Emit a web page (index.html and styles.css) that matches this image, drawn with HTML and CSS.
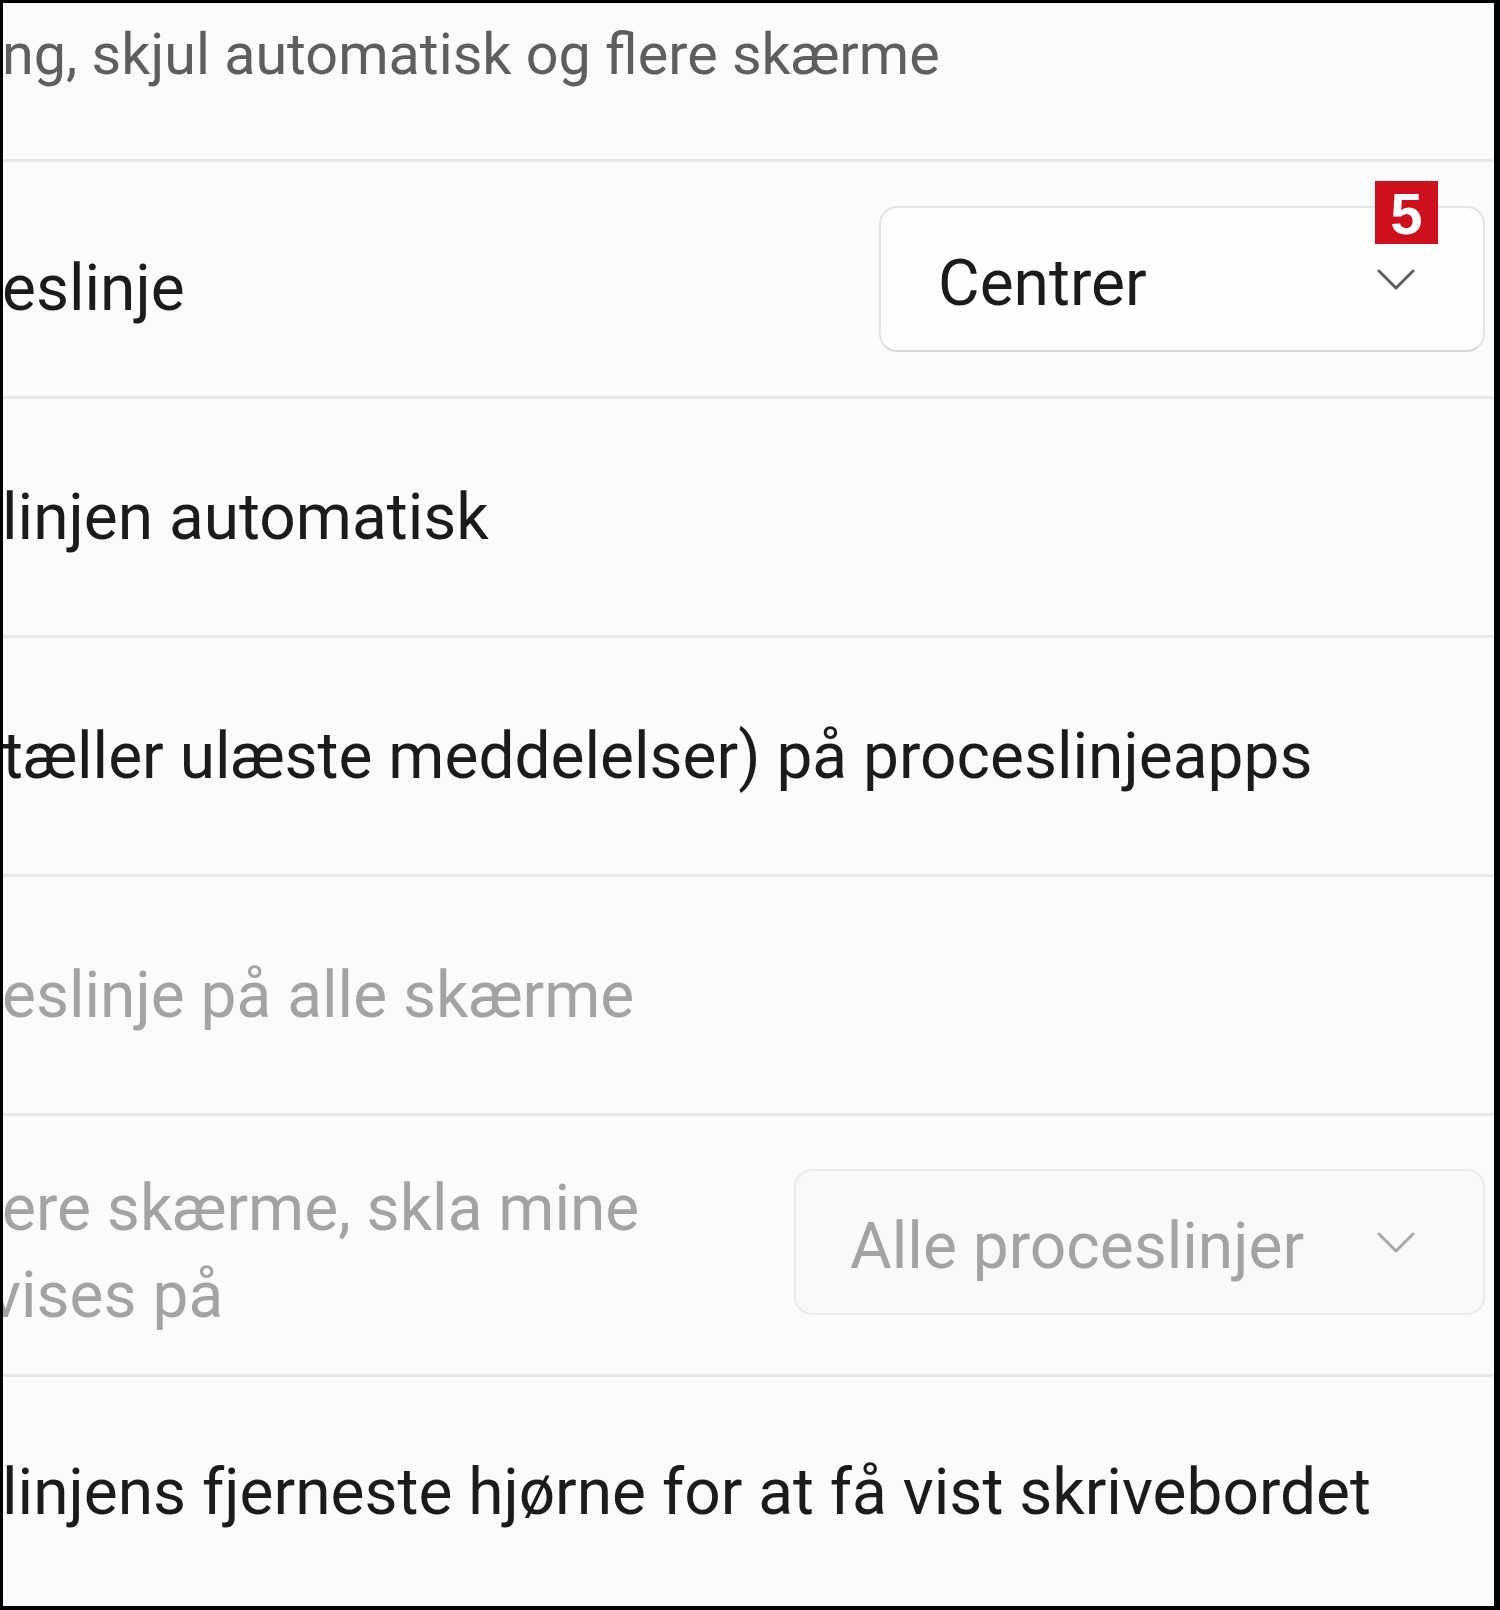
FILE: index.html
```html
<!DOCTYPE html>
<html lang="da">
<head>
<meta charset="utf-8">
<title>Proceslinjens funktionsmåde</title>
<link rel="stylesheet" href="styles.css">
</head>
<body>
<div class="frame">
  <div class="row header">
    <div class="subtitle">ng, skjul automatisk og flere skærme</div>
  </div>

  <div class="row row-align">
    <div class="label label-align">eslinje</div>
    <div class="dropdown dd-align">
      <span class="dd-value">Centrer</span>
      <svg class="chevron" viewBox="0 0 38 23" width="38" height="23"><polyline points="2,3 19,20 36,3"/></svg>
      <span class="badge">5</span>
    </div>
  </div>

  <div class="row">
    <div class="label">linjen automatisk</div>
  </div>

  <div class="row">
    <div class="label">tæller ulæste meddelelser) på proceslinjeapps</div>
  </div>

  <div class="row">
    <div class="label disabled">eslinje på alle skærme</div>
  </div>

  <div class="row row-tall">
    <div class="label disabled label-multi">
      <span class="line">ere skærme, skla mine</span>
      <span class="line line-cut">vises på</span>
    </div>
    <div class="dropdown dd-multi is-disabled">
      <span class="dd-value">Alle proceslinjer</span>
      <svg class="chevron" viewBox="0 0 38 23" width="38" height="23"><polyline points="2,3 19,20 36,3"/></svg>
    </div>
  </div>

  <div class="row row-last">
    <div class="label">linjens fjerneste hjørne for at få vist skrivebordet</div>
  </div>
</div>
</body>
</html>
```

FILE: styles.css
```css
* {
  box-sizing: border-box;
}

html, body {
  margin: 0;
  padding: 0;
  background: #000;
}

.frame {
  width: 1500px;
  height: 1610px;
  border-style: solid;
  border-color: #000;
  border-width: 3px 6px 4px 3px;
  background: #fbfbfb;
  overflow: hidden;
  font-family: Roboto, "Liberation Sans", sans-serif;
  color: #1b1b1b;
}

.row {
  display: flex;
  align-items: center;
  justify-content: space-between;
  height: 239px;
  padding: 0 9px 0 0;
  border-bottom: 3px solid #e8e8e8;
}

.header {
  height: 159px;
  align-items: flex-start;
  padding-top: 17px;
}

.row-align {
  height: 237px;
}

.row-tall {
  height: 261px;
}

.row-last {
  height: 230px;
  border-bottom: none;
}

.subtitle {
  font-size: 57.5px;
  line-height: 70px;
  color: #5e5e5e;
  white-space: nowrap;
  margin-left: -1px;
}

.label {
  font-size: 64px;
  line-height: 87px;
  white-space: nowrap;
  margin-left: -1px;
}

.label-align {
  margin-top: 18px;
}

.label-multi {
  margin-top: 13px;
}

.line {
  display: block;
}

.line-cut {
  margin-left: -12px;
}

.disabled {
  color: #a3a3a3;
}

.dropdown {
  position: relative;
  display: flex;
  align-items: center;
  justify-content: space-between;
  height: 146px;
  border: 2px solid #e4e4e4;
  border-bottom-color: #d8d8d8;
  border-radius: 18px;
  background: #fefefe;
  padding: 0 68px 0 57px;
  font-size: 64px;
  line-height: 80px;
  color: #1b1b1b;
}

.dd-align {
  width: 606px;
}

.dd-multi {
  width: 691px;
  margin-top: -6px;
  padding-left: 54px;
}

.dd-value {
  margin-top: 10px;
  white-space: nowrap;
}

.chevron {
  display: block;
  fill: none;
  stroke: #5c5c5c;
  stroke-width: 3;
  stroke-linecap: round;
  stroke-linejoin: round;
}

.is-disabled {
  background: #f9f9f9;
  border-color: #ececec;
  color: #a3a3a3;
}

.is-disabled .chevron {
  stroke: #a8a8a8;
}

.badge {
  position: absolute;
  top: -27px;
  right: 45px;
  width: 63px;
  height: 63px;
  background: #cc101c;
  color: #fff;
  font-family: "Liberation Sans", Arial, sans-serif;
  font-weight: bold;
  font-size: 58px;
  line-height: 66px;
  text-align: center;
}
```
